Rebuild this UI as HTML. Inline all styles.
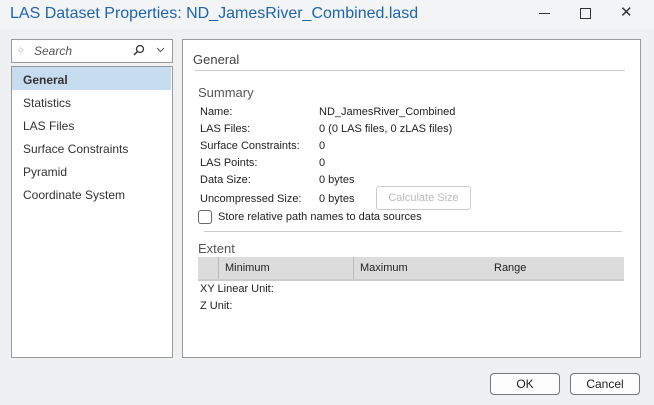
<html><head><style>
body{margin:0;width:654px;height:405px;background:#eff0f2;font-family:"Liberation Sans",sans-serif;font-size:11px;color:#222;position:relative;overflow:hidden}
.a{position:absolute;white-space:nowrap}
.btn{position:absolute;border:1px solid #777;border-radius:4px;background:#fdfdfd;text-align:center;line-height:20px;font-size:12px}
</style></head><body>
<div class="a" style="left:0;top:0;width:654px;height:29px;background:#f3f4f6"></div>
<div class="a" style="left:10px;top:5px;font-size:16px;color:#1f64ad">LAS Dataset Properties: ND_JamesRiver_Combined.lasd</div>
<div class="a" style="left:539px;top:13px;width:11px;height:1px;background:#333"></div>
<div class="a" style="left:580px;top:8px;width:9px;height:9px;border:1px solid #333"></div>
<div class="a" style="left:620px;top:3px;font-size:15px;color:#333">✕</div>
<div class="a" style="left:11px;top:39px;width:160px;height:22px;border:1px solid #999;background:#fff"></div>
<div class="a" style="left:16px;top:44px;color:#bbb;font-size:11px">✧</div>
<div class="a" style="left:34px;top:44px;font-style:italic;color:#555;font-size:12px">Search</div>
<svg class="a" style="left:133px;top:44px" width="12" height="12"><circle cx="7" cy="5" r="3.5" fill="none" stroke="#333" stroke-width="1.3"/><line x1="4.5" y1="7.5" x2="1" y2="11" stroke="#333" stroke-width="1.5"/></svg>
<svg class="a" style="left:156px;top:47px" width="9" height="6"><path d="M1 1L4.5 4.5L8 1" fill="none" stroke="#555"/></svg>
<div class="a" style="left:11px;top:66px;width:160px;height:290px;border:1px solid #999;background:#fff"></div>
<div class="a" style="left:12px;top:67px;width:159px;height:23px;background:#c7dcef"></div>
<div class="a" style="left:23px;top:73px;font-size:12px;font-weight:bold;color:#333">General</div>
<div class="a" style="left:23px;top:96px;font-size:12px;color:#333">Statistics</div>
<div class="a" style="left:23px;top:119px;font-size:12px;color:#333">LAS Files</div>
<div class="a" style="left:23px;top:142px;font-size:12px;color:#333">Surface Constraints</div>
<div class="a" style="left:23px;top:165px;font-size:12px;color:#333">Pyramid</div>
<div class="a" style="left:23px;top:188px;font-size:12px;color:#333">Coordinate System</div>
<div class="a" style="left:182px;top:39px;width:457px;height:317px;border:1px solid #999;background:#fff"></div>
<div class="a" style="left:193px;top:52px;font-size:13px;color:#444">General</div>
<div class="a" style="left:195px;top:70px;width:430px;height:1px;background:#ccc"></div>
<div class="a" style="left:198px;top:85px;font-size:13px;color:#555">Summary</div>
<div class="a" style="left:200px;top:104px;line-height:17px">Name:<br>LAS Files:<br>Surface Constraints:<br>LAS Points:<br>Data Size:</div>
<div class="a" style="left:319px;top:104px;line-height:17px">ND_JamesRiver_Combined<br>0 (0 LAS files, 0 zLAS files)<br>0<br>0<br>0 bytes</div>
<div class="a" style="left:200px;top:193px">Uncompressed Size:</div>
<div class="a" style="left:319px;top:193px">0 bytes</div>
<div class="a" style="left:376px;top:186px;width:93px;height:22px;border:1px solid #ccc;border-radius:3px;color:#bbb;text-align:center;line-height:22px">Calculate Size</div>
<div class="a" style="left:198px;top:210px;width:12px;height:12px;border:1px solid #666;border-radius:3px"></div>
<div class="a" style="left:218px;top:211px">Store relative path names to data sources</div>
<div class="a" style="left:204px;top:231px;width:418px;height:1px;background:#ccc"></div>
<div class="a" style="left:198px;top:241px;font-size:13px;color:#555">Extent</div>
<div class="a" style="left:198px;top:257px;width:426px;height:22px;background:#dcdcdc;border-bottom:2px solid #ccc"></div>
<div class="a" style="left:218px;top:257px;width:1px;height:22px;background:#bbb"></div>
<div class="a" style="left:353px;top:257px;width:1px;height:22px;background:#bbb"></div>
<div class="a" style="left:225px;top:262px">Minimum</div>
<div class="a" style="left:360px;top:262px">Maximum</div>
<div class="a" style="left:494px;top:262px">Range</div>
<div class="a" style="left:200px;top:283px">XY Linear Unit:</div>
<div class="a" style="left:200px;top:300px">Z Unit:</div>
<div class="btn" style="left:490px;top:373px;width:68px">OK</div>
<div class="btn" style="left:570px;top:373px;width:68px">Cancel</div>
</body></html>
